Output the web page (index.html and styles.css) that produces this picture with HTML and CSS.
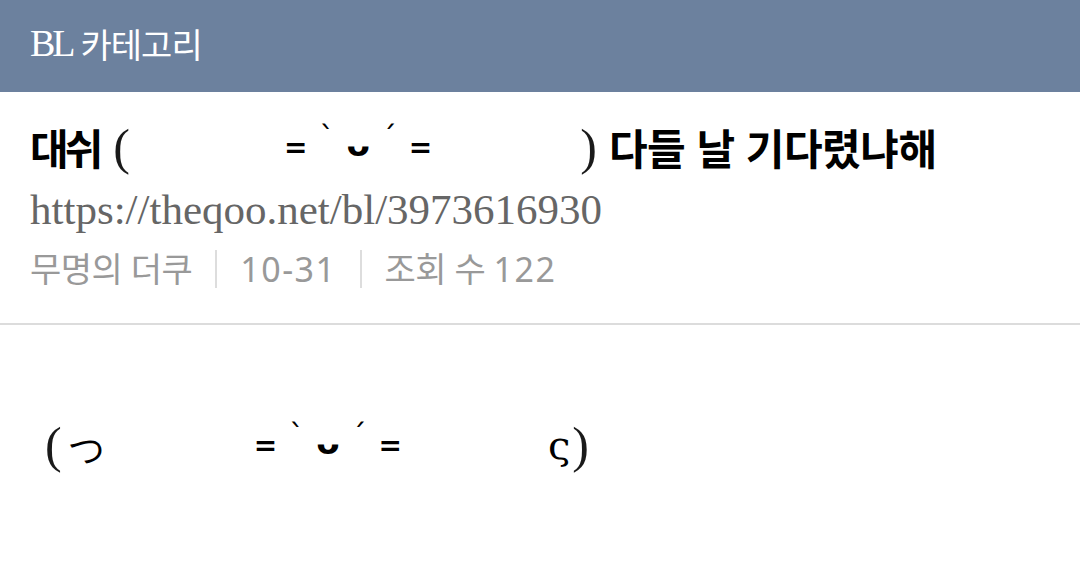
FILE: index.html
```html
<!DOCTYPE html>
<html lang="ko">
<head>
    <meta charset="UTF-8">
    <meta name="viewport" content="width=device-width, initial-scale=1.0">
    <title>BL 카테고리</title>
    <link rel="stylesheet" href="styles.css">
</head>
<body>
    <header class="top-bar">
        <span class="latin">BL</span> 카테고리
    </header>
    <main>
        <section class="post-head">
            <h1 class="post-title">
                <span class="title-lead">대쉬</span>
                <span class="paren open">(</span>
                <span class="face title-face"><span class="eq">=</span><span class="mark">`</span><span class="mouth">ᴗ</span><span class="mark">´</span><span class="eq">=</span></span>
                <span class="paren close">)</span>
                <span class="title-rest">다들 날 기다렸냐해</span>
            </h1>
            <p class="post-url">https://theqoo.net/bl/3973616930</p>
            <div class="post-meta">
                <span>무명의 더쿠</span>
                <span class="sep"></span>
                <span class="num">10-31</span>
                <span class="sep"></span>
                <span>조회 수 <span class="num">122</span></span>
            </div>
        </section>
        <section class="post-body">
            <p class="kaomoji">
                <span class="paren">(</span>
                <span class="hand">っ</span>
                <span class="face body-face"><span class="eq">=</span><span class="mark">`</span><span class="mouth">ᴗ</span><span class="mark">´</span><span class="eq">=</span></span>
                <span class="hand sigma">ς</span>
                <span class="paren">)</span>
            </p>
        </section>
    </main>
</body>
</html>
```

FILE: styles.css
```css
body {
    margin: 0;
    padding: 0;
    background-color: #ffffff;
    color: #000000;
    font-family: "Noto Sans CJK KR", "Noto Sans", sans-serif;
}
.top-bar {
    background-color: #6c819e;
    color: #ffffff;
    height: 86px;
    padding: 0 0 6px 30px;
    display: flex;
    align-items: center;
    font-size: 34px;
    letter-spacing: -1px;
}
.top-bar .latin {
    font-family: "Liberation Serif", serif;
    font-size: 38px;
    letter-spacing: -3px;
    margin-right: 8px;
}
.post-head {
    padding: 20px 30px 0;
    border-bottom: 2px solid #dcdcdc;
    height: 211px;
}
.post-title {
    margin: 0;
    font-size: 42px;
    font-weight: bold;
    line-height: 70px;
    letter-spacing: -0.5px;
    display: flex;
    align-items: center;
}
.title-lead {
    letter-spacing: -4px;
}
.paren {
    font-family: "Liberation Serif", serif;
    font-weight: normal;
    font-size: 50px;
    line-height: 1;
    letter-spacing: 0;
    color: #1a1a1a;
}
.post-title .open {
    margin-left: 14px;
}
.post-title .close {
    margin-right: 12px;
}
.face {
    display: inline-flex;
    align-items: center;
    gap: 12px;
    font-family: "DejaVu Sans", sans-serif;
    font-weight: normal;
    letter-spacing: 0;
    line-height: 1;
}
.title-face {
    margin: -6px 148px 0 154px;
}
.eq {
    font-size: 28px;
    font-weight: bold;
    margin-top: 8px;
}
.mark {
    font-size: 30px;
    margin-bottom: 12px;
}
.mouth {
    font-size: 34px;
    font-weight: bold;
}
.post-url {
    margin: 0;
    font-family: "Liberation Serif", serif;
    font-size: 43px;
    color: #666666;
    line-height: 56px;
}
.post-meta {
    display: flex;
    align-items: center;
    gap: 23px;
    font-family: "Noto Sans", "Noto Sans CJK KR", sans-serif;
    font-size: 34px;
    color: #999999;
    line-height: 62px;
    letter-spacing: -0.5px;
}
.num {
    letter-spacing: 1.5px;
}
.sep {
    width: 2px;
    height: 38px;
    background-color: #dddddd;
}
.post-body {
    padding: 90px 45px 0;
}
.kaomoji {
    margin: 0;
    display: flex;
    align-items: center;
    font-size: 36px;
}
.hand {
    font-family: "DejaVu Serif", serif;
    font-size: 44px;
    margin-left: 2px;
}
.body-face {
    margin: -6px 0 0 145px;
}
.sigma {
    font-size: 40px;
    margin: 0 2px 0 146px;
}
```
